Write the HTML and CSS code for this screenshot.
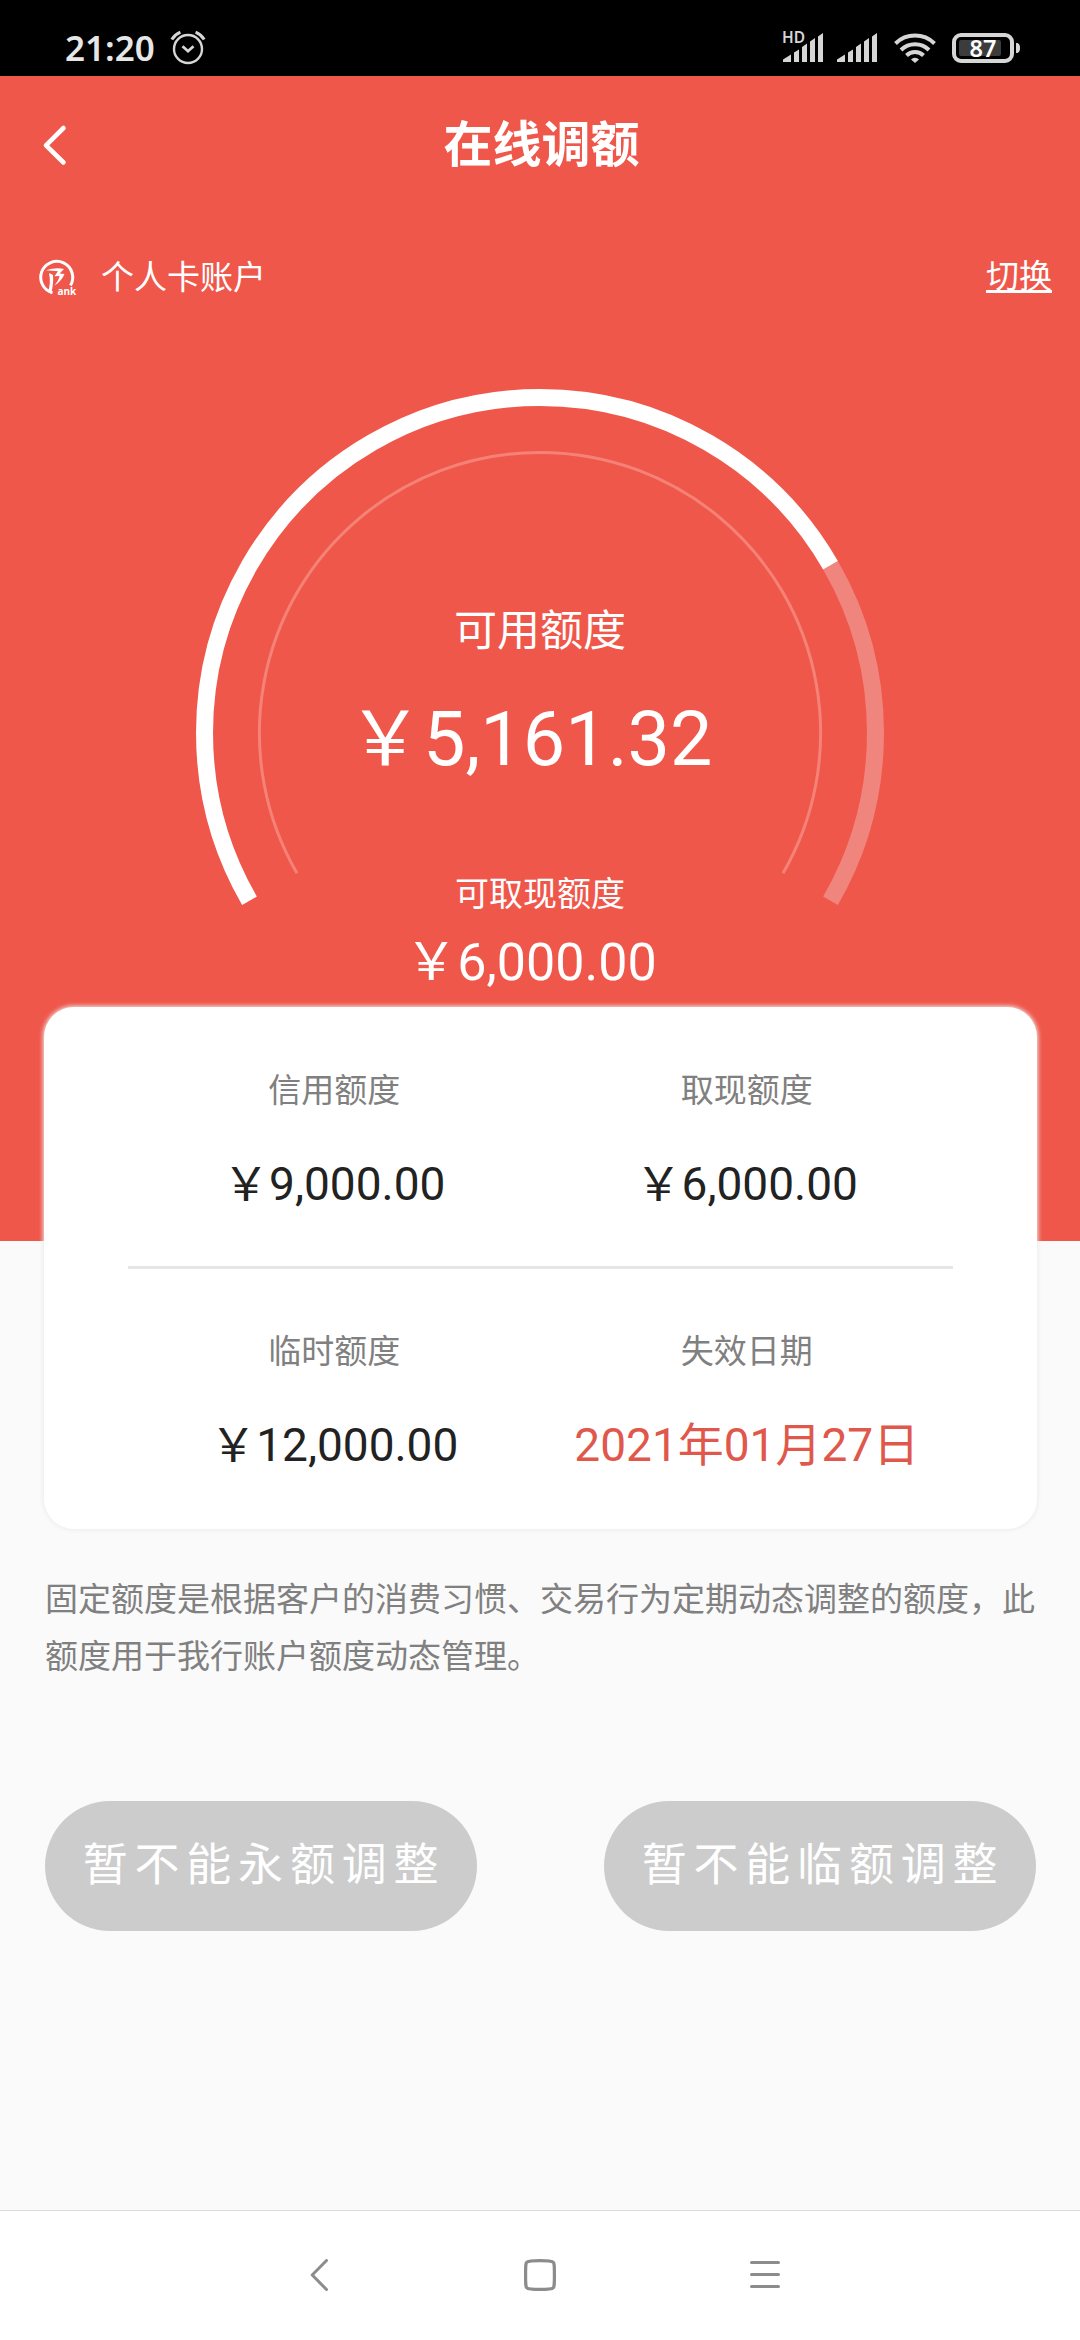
FILE: index.html
```html
<!DOCTYPE html>
<html lang="zh-CN">
<head>
<meta charset="utf-8">
<title>在线调额</title>
<link rel="stylesheet" href="styles.css">
</head>
<body>
<div class="screen">
  <div class="status-bar">
    <div class="status-left">
      <span class="clock">21:20</span>
      <svg class="alarm" width="36" height="36" viewBox="0 0 36 36" fill="none" stroke="#d6d6d6" stroke-width="2.4">
        <circle cx="18" cy="20" r="14"/>
        <path d="M12.5 17.2l5.5 5 5.5-5" stroke-width="2.8"/>
        <path d="M1.8 10.6c2-3.4 4.8-5.8 8.6-7.4M34.2 10.6c-2-3.4-4.8-5.8-8.6-7.4" stroke-width="3"/>
      </svg>
    </div>
    <div class="status-right">
      <svg class="signal-hd" width="44" height="40" viewBox="0 -6 44 40" fill="#d6d6d6">
        <text class="hd" x="1" y="13">HD</text>
        <path d="M2 29.500L10 24.500V32H2zM13 22.500l5-3V32h-5zM21 17l5-3.500V32h-5zM29 11.500l5-3.500V32h-5zM37 6.500L42 3V32h-5z"/>
      </svg>
      <svg class="signal" width="42" height="34" viewBox="0 0 42 34" fill="#d6d6d6">
        <path d="M1 29.500L9 24.500V32H1zM12 22.500l5-3V32h-5zM20 17l5-3.500V32h-5zM28 11.500l5-3.500V32h-5zM36 6.500L41 3V32h-5z"/>
      </svg>
      <svg class="wifi" width="44" height="34" viewBox="0 0 44 34" fill="none" stroke="#d6d6d6" stroke-width="4">
        <path d="M2.500 13.500a28 28 0 0 1 39 0M8 20a20 20 0 0 1 28 0M13.500 25.500a12 12 0 0 1 17 0"/>
        <path d="M22 33l-4-3.600a5.500 5.500 0 0 1 8 0z" fill="#d6d6d6" stroke="none"/>
      </svg>
      <svg class="battery" width="70" height="34" viewBox="0 0 70 34">
        <rect x="2" y="5" width="58" height="26" rx="7" fill="none" stroke="#d6d6d6" stroke-width="4"/>
        <rect x="7" y="10" width="42" height="16" rx="2" fill="#3c3c3c"/>
        <path d="M64 13c3 0 4 1.500 4 5s-1 5-4 5z" fill="#d6d6d6"/>
        <text class="level" x="31" y="26.500">87</text>
      </svg>
    </div>
  </div>

  <section class="hero">
    <header class="title-bar">
      <svg class="back" width="24" height="42" viewBox="0 0 24 42" fill="none" stroke="#fff" stroke-width="4.600" stroke-linecap="round" stroke-linejoin="round">
        <path d="M21.500 4L4 21.300 21.500 38.500"/>
      </svg>
      <h1 class="title">在线调额</h1>
    </header>
    <div class="account">
      <svg class="logo" width="42" height="40" viewBox="0 0 42 40">
        <path d="M15.500 34.800A16 16 0 1 1 33.500 27.500" fill="none" stroke="#fff" stroke-width="3"/>
        <path d="M9 12.500c6-2.500 13-3 18-1.500l-4.500 4.500 5 .5c-2 5-5.500 8.500-10 11.500 3-4 4.500-6.500 5-9.500l-5 .3 3.500-5c-4-.6-8-.4-12-.8zM12 15l4 2c.5 6 0 12-2 18.500L11 34c2-6 2.500-12 1-19z" fill="#fff"/>
        <text class="logo-text" x="20.500" y="36.500">ank</text>
      </svg>
      <span class="account-name">个人卡账户</span>
      <a class="switch">切换</a>
    </div>
    <div class="gauge">
      <svg class="dial" width="690" height="530" viewBox="0 0 690 530" fill="none">
        <path d="M635.500 180.200A335.500 335.500 0 0 1 635.500 515.800" stroke="#f0857e" stroke-width="17"/>
        <path d="M54.500 515.800A335.500 335.500 0 0 1 345 12.500A335.500 335.500 0 0 1 635.500 180.200" stroke="#fff" stroke-width="17"/>
        <path d="M102 488.300A280.600 280.600 0 1 1 588 488.300" stroke="#f58277" stroke-width="3"/>
      </svg>
      <div class="readout">
        <p class="main-label">可用额度</p>
        <p class="main-amount">￥5,161.32</p>
        <p class="cash-label">可取现额度</p>
        <p class="cash-amount">￥6,000.00</p>
      </div>
    </div>
  </section>

  <section class="card">
    <div class="limits">
      <div class="cell"><span class="label">信用额度</span><span class="value">￥9,000.00</span></div>
      <div class="cell"><span class="label">取现额度</span><span class="value">￥6,000.00</span></div>
    </div>
    <div class="limits">
      <div class="cell"><span class="label">临时额度</span><span class="value">￥12,000.00</span></div>
      <div class="cell"><span class="label">失效日期</span><span class="value date">2021年01月27日</span></div>
    </div>
  </section>

  <p class="note">固定额度是根据客户的消费习惯、交易行为定期动态调整的额度，此额度用于我行账户额度动态管理。</p>

  <div class="actions">
    <button class="action">暂不能永额调整</button>
    <button class="action">暂不能临额调整</button>
  </div>

  <nav class="nav-bar">
    <svg width="36" height="36" viewBox="0 0 36 36" fill="none" stroke="#8c8c8c" stroke-width="3" stroke-linecap="round" stroke-linejoin="round"><path d="M29.500 3.500L15.200 18 29.500 32.500"/></svg>
    <svg width="36" height="36" viewBox="0 0 36 36" fill="none" stroke="#8c8c8c" stroke-width="3.200"><path d="M18 3.600C28 3.600 30 4 31.200 5.200S32.400 8 32.400 18 32.400 29.600 31.200 30.800 28 32.400 18 32.400 6 32 4.800 30.800 3.600 28 3.600 18 3.600 6.400 4.800 5.200 8 3.600 18 3.600z"/></svg>
    <svg width="36" height="36" viewBox="0 0 36 36" fill="none" stroke="#8c8c8c" stroke-width="3" stroke-linecap="round"><path d="M4.500 5.500h27M4.500 17.500h27M4.500 29.500h27"/></svg>
  </nav>
</div>
</body>
</html>
```

FILE: styles.css
```css
* {
  box-sizing: border-box;
  margin: 0;
  padding: 0;
}

body {
  background: #fafafa;
  font-family: Roboto, "Noto Sans CJK SC", sans-serif;
  color: #fff;
}

svg {
  display: block;
  flex: none;
  overflow: visible;
}

.screen {
  display: flex;
  flex-direction: column;
  width: 1080px;
  height: 2340px;
}

/* system status bar */
.status-bar {
  display: flex;
  justify-content: space-between;
  height: 76px;
  padding: 30px 58px 0 65px;
  background: #000;
  font-family: "Noto Sans", sans-serif;
}

.status-left,
.status-right {
  display: flex;
}

.clock {
  width: 105px;
  color: #e6e6e6;
  font-size: 35px;
  font-weight: 600;
  line-height: 35px;
}

.alarm {
  margin-top: -1px;
}

.signal-hd {
  margin-top: -6px;
}

.hd {
  font-size: 15.5px;
  font-weight: 600;
}

.signal {
  margin-left: 11px;
}

.wifi {
  margin-left: 15px;
}

.battery {
  margin-left: 15px;
}

.level {
  fill: #fff;
  font-size: 23.5px;
  font-weight: 600;
  text-anchor: middle;
}

/* red area */
.hero {
  display: flex;
  flex-direction: column;
  height: 1165px;
  background: #f0574b;
}

.title-bar {
  display: grid;
  grid-template-columns: 72px 1fr 69px;
  align-items: center;
  height: 138px;
}

.back {
  margin-left: 42px;
}

.title {
  padding-top: 2px;
  font-size: 49px;
  font-weight: 700;
  line-height: 60px;
  text-align: center;
}

.account {
  display: flex;
  align-items: center;
  height: 128px;
  padding: 0 28px 0 37px;
  font-size: 33px;
  line-height: 40px;
}

.logo-text {
  fill: #fff;
  font: 700 10px "Open Sans", sans-serif;
}

.account-name {
  margin-left: 22px;
}

.switch {
  height: 34px;
  margin: 0 0 4px auto;
  border-bottom: 3px solid #fff;
  line-height: 35px;
}

.gauge {
  display: grid;
  justify-items: center;
  margin-top: 43px;
}

.dial,
.readout {
  grid-area: 1 / 1;
}

.readout {
  display: flex;
  flex-direction: column;
  align-items: center;
  padding-top: 216px;
  white-space: nowrap;
}

.main-label {
  font-size: 43px;
  line-height: 60px;
}

.main-amount {
  margin-top: 28px;
  padding-right: 20px;
  font-size: 75.5px;
  line-height: 100px;
}

.cash-label {
  margin-top: 83px;
  font-size: 34px;
  line-height: 44px;
}

.cash-amount {
  margin-top: 17px;
  padding-right: 18px;
  font-size: 52px;
  line-height: 60px;
}

/* limits card */
.card {
  flex: none;
  height: 522px;
  margin: -234px 43px 0 44px;
  padding: 0 84px;
  border-radius: 30px;
  background: #fff;
  box-shadow: 0 0 4px 1px #ececec;
}

.limits {
  display: grid;
  grid-template-columns: 1fr 1fr;
  height: 260px;
  padding-top: 62px;
}

.limits:first-child {
  height: 262px;
  padding-top: 63px;
  border-bottom: 3px solid #e6e6e6;
}

.cell {
  display: flex;
  flex-direction: column;
  align-items: center;
  gap: 47px;
}

.label {
  color: #808080;
  font-size: 33px;
  line-height: 42px;
}

.value {
  color: #222;
  font-size: 46px;
  line-height: 50px;
  white-space: nowrap;
}

.date {
  color: #e0574c;
}

.note {
  margin: 42px 45px 0;
  color: #808080;
  font-size: 33px;
  line-height: 57px;
}

.actions {
  display: flex;
  justify-content: space-between;
  margin: 116px 44px 0 45px;
}

.action {
  width: 432px;
  height: 130px;
  padding: 0 0 10px 6px;
  border: 0;
  border-radius: 65px;
  background: #ccc;
  color: #fff;
  font: 45px Roboto, "Noto Sans CJK SC", sans-serif;
  letter-spacing: 6.8px;
  white-space: nowrap;
}

/* system navigation */
.nav-bar {
  display: flex;
  justify-content: center;
  gap: 189px;
  height: 130px;
  margin-top: auto;
  padding-top: 46px;
  border-top: 1px solid #dcdcdc;
  background: #fff;
}
```
